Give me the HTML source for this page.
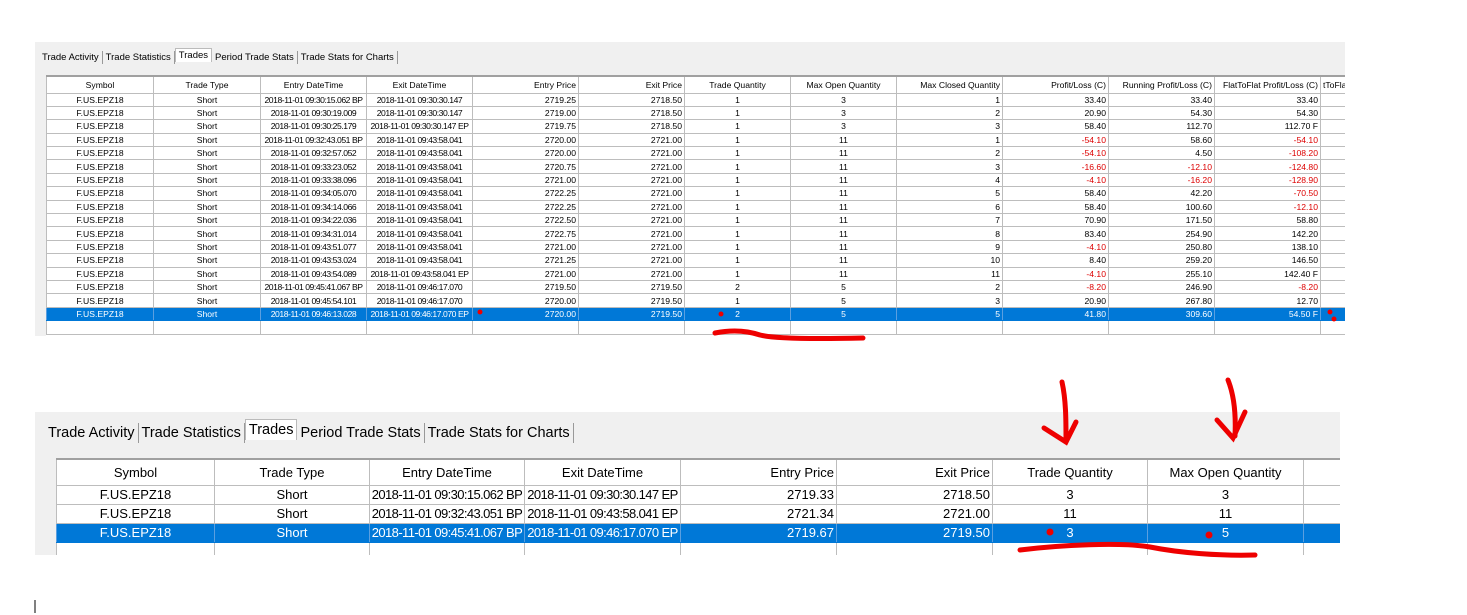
<!DOCTYPE html>
<html><head><meta charset="utf-8"><style>
*{margin:0;padding:0;box-sizing:border-box}
body{width:1467px;height:615px;background:#fff;position:relative;overflow:hidden;font-family:"Liberation Sans",sans-serif;color:#000}
.panel{position:absolute;background:#f0f0f0}
.tabs{position:absolute;white-space:nowrap}
.tabs span{display:inline-block;border-right:1px solid #999;padding:0 3px}
.tabs span.act{background:#fff;border:1px solid #bbb;border-bottom:none}
table{position:absolute;border-collapse:collapse;table-layout:fixed;background:#fff}
td,th{border:1px solid #bdbdbd;white-space:nowrap;overflow:hidden;font-weight:normal;padding:0 2px}
th{text-align:center;border-top:2px solid #a0a0a0}
.c{text-align:center}.r{text-align:right}
.dt{text-align:center;letter-spacing:-0.45px;padding:0}
.neg{color:#d00}
tr.sel td{background:#0078d7;color:#fff;border-color:#0078d7 #5a9fe0}
#t1{left:46px;top:75px;font-size:8.6px}
#t1 th{height:17px}
#t1 td{height:13.4px;line-height:12px}
#t2{left:56px;top:458px;font-size:13px}
#t2 .dt{letter-spacing:-0.6px}
#t2 th{height:26px}
#t2 td{height:19px;line-height:17px}
</style></head><body>
<div class="panel" style="left:35px;top:42px;width:1310px;height:294px"></div>
<div class="tabs" style="left:39px;top:50px;font-size:9.5px;line-height:13px"><span>Trade Activity</span><span>Trade Statistics</span><span class="act" style="position:relative;top:-2px">Trades</span><span>Period Trade Stats</span><span>Trade Stats for Charts</span></div>
<div style="position:absolute;left:46px;top:75px;width:1299px;height:261px;background:#fff;overflow:hidden">
<table id="t1" style="left:0;top:0;width:1380px">
<colgroup><col style="width:107px"><col style="width:107px"><col style="width:106px"><col style="width:106px"><col style="width:106px"><col style="width:106px"><col style="width:106px"><col style="width:106px"><col style="width:106px"><col style="width:106px"><col style="width:106px"><col style="width:106px"><col style="width:106px"></colgroup>
<tbody id="b1"></tbody></table></div>

<div class="panel" style="left:35px;top:412px;width:1305px;height:143px"></div>
<div class="tabs" style="left:45px;top:422px;font-size:14.5px;line-height:20px"><span>Trade Activity</span><span>Trade Statistics</span><span class="act" style="position:relative;top:-3px">Trades</span><span>Period Trade Stats</span><span>Trade Stats for Charts</span></div>
<div style="position:absolute;left:56px;top:458px;width:1284px;height:97px;overflow:hidden;background:#fff">
<table id="t2" style="left:0;top:0;width:1400px">
<colgroup><col style="width:158px"><col style="width:155px"><col style="width:155px"><col style="width:156px"><col style="width:156px"><col style="width:156px"><col style="width:155px"><col style="width:156px"><col style="width:153px"></colgroup>
<tbody>
<tr><th>Symbol</th><th>Trade Type</th><th>Entry DateTime</th><th>Exit DateTime</th><th class="r">Entry Price</th><th class="r">Exit Price</th><th>Trade Quantity</th><th>Max Open Quantity</th><th>M</th></tr>
<tr><td class="c">F.US.EPZ18</td><td class="c">Short</td><td class="dt">2018-11-01 09:30:15.062 BP</td><td class="dt">2018-11-01 09:30:30.147 EP</td><td class="r">2719.33</td><td class="r">2718.50</td><td class="c">3</td><td class="c">3</td><td></td></tr>
<tr><td class="c">F.US.EPZ18</td><td class="c">Short</td><td class="dt">2018-11-01 09:32:43.051 BP</td><td class="dt">2018-11-01 09:43:58.041 EP</td><td class="r">2721.34</td><td class="r">2721.00</td><td class="c">11</td><td class="c">11</td><td></td></tr>
<tr class="sel"><td class="c">F.US.EPZ18</td><td class="c">Short</td><td class="dt">2018-11-01 09:45:41.067 BP</td><td class="dt">2018-11-01 09:46:17.070 EP</td><td class="r">2719.67</td><td class="r">2719.50</td><td class="c">3</td><td class="c">5</td><td></td></tr>
<tr><td></td><td></td><td></td><td></td><td></td><td></td><td></td><td></td><td></td></tr>
</tbody></table></div>

<svg style="position:absolute;left:0;top:0" width="1467" height="615">
<g fill="none" stroke="#e00" stroke-linecap="round" stroke-width="5">
<path d="M715 333 C730 330 745 330 760 335 C775 339 820 339 863 338"/>
<path d="M1062 382 C1066 400 1066 420 1066 440"/>
<path d="M1044 428 L1066 442 L1076 422"/>
<path d="M1228 380 C1234 395 1236 415 1235 436"/>
<path d="M1217 420 L1233 438 L1245 412"/>
<path d="M1020 550 C1060 545 1120 542 1150 547 C1180 553 1220 556 1255 555"/>
</g>
<g fill="#e00"><circle cx="480" cy="312" r="2.5"/><circle cx="721" cy="314" r="2.5"/><circle cx="1330" cy="312" r="2.5"/><circle cx="1334" cy="319" r="2.5"/><circle cx="1050" cy="532" r="3.5"/><circle cx="1209" cy="535" r="3.5"/></g>
<line x1="35" y1="600" x2="35" y2="613" stroke="#000" stroke-width="1"/>
</svg>
<script>
var d=[
["09:30:15.062 BP","09:30:30.147","2719.25","2718.50","1","3","1","33.40","33.40","33.40"],
["09:30:19.009","09:30:30.147","2719.00","2718.50","1","3","2","20.90","54.30","54.30"],
["09:30:25.179","09:30:30.147 EP","2719.75","2718.50","1","3","3","58.40","112.70","112.70 F"],
["09:32:43.051 BP","09:43:58.041","2720.00","2721.00","1","11","1","-54.10","58.60","-54.10"],
["09:32:57.052","09:43:58.041","2720.00","2721.00","1","11","2","-54.10","4.50","-108.20"],
["09:33:23.052","09:43:58.041","2720.75","2721.00","1","11","3","-16.60","-12.10","-124.80"],
["09:33:38.096","09:43:58.041","2721.00","2721.00","1","11","4","-4.10","-16.20","-128.90"],
["09:34:05.070","09:43:58.041","2722.25","2721.00","1","11","5","58.40","42.20","-70.50"],
["09:34:14.066","09:43:58.041","2722.25","2721.00","1","11","6","58.40","100.60","-12.10"],
["09:34:22.036","09:43:58.041","2722.50","2721.00","1","11","7","70.90","171.50","58.80"],
["09:34:31.014","09:43:58.041","2722.75","2721.00","1","11","8","83.40","254.90","142.20"],
["09:43:51.077","09:43:58.041","2721.00","2721.00","1","11","9","-4.10","250.80","138.10"],
["09:43:53.024","09:43:58.041","2721.25","2721.00","1","11","10","8.40","259.20","146.50"],
["09:43:54.089","09:43:58.041 EP","2721.00","2721.00","1","11","11","-4.10","255.10","142.40 F"],
["09:45:41.067 BP","09:46:17.070","2719.50","2719.50","2","5","2","-8.20","246.90","-8.20"],
["09:45:54.101","09:46:17.070","2720.00","2719.50","1","5","3","20.90","267.80","12.70"],
["09:46:13.028","09:46:17.070 EP","2720.00","2719.50","2","5","5","41.80","309.60","54.50 F"]];
var h='<tr><th>Symbol</th><th>Trade Type</th><th>Entry DateTime</th><th>Exit DateTime</th><th class="r">Entry Price</th><th class="r">Exit Price</th><th>Trade Quantity</th><th>Max Open Quantity</th><th class="r">Max Closed Quantity</th><th class="r">Profit/Loss (C)</th><th class="r">Running Profit/Loss (C)</th><th class="r">FlatToFlat Profit/Loss (C)</th><th style="text-align:left">tToFlat</th></tr>';
function n(v){return v[0]=='-'?' neg':''}
d.forEach(function(r,i){var s=i==16;
h+='<tr'+(s?' class="sel"':'')+'><td class="c">F.US.EPZ18</td><td class="c">Short</td><td class="dt">2018-11-01 '+r[0]+'</td><td class="dt">2018-11-01 '+r[1]+'</td><td class="r">'+r[2]+'</td><td class="r">'+r[3]+'</td><td class="c">'+r[4]+'</td><td class="c">'+r[5]+'</td><td class="r">'+r[6]+'</td><td class="r'+n(r[7])+'">'+r[7]+'</td><td class="r'+n(r[8])+'">'+r[8]+'</td><td class="r'+n(r[9])+'">'+r[9]+'</td><td></td></tr>';});
h+='<tr>'+'<td></td>'.repeat(13)+'</tr>';
document.getElementById('b1').innerHTML=h;
</script>
</body></html>
